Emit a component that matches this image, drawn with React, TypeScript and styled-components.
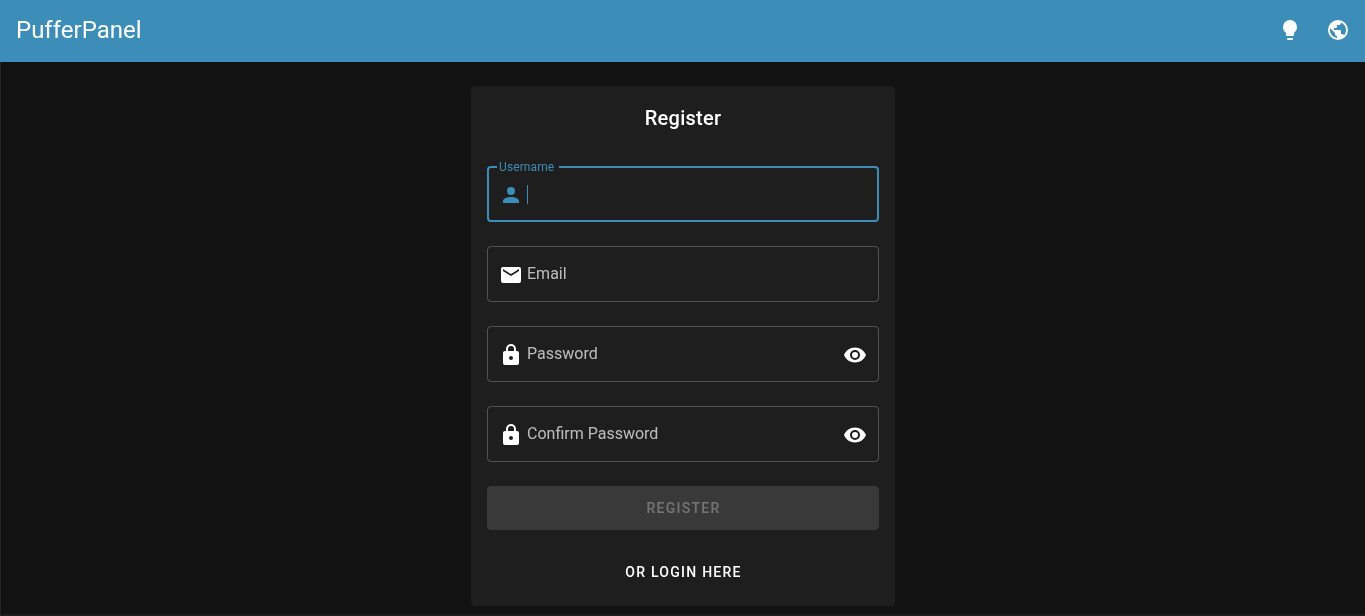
import React from "react";
import styled, { createGlobalStyle } from "styled-components";

const Global = createGlobalStyle`
  html, body { margin: 0; padding: 0; height: 100%; background: #121212; }
  body { font-family: Roboto, "Liberation Sans", sans-serif; overflow: hidden; }
  * { box-sizing: border-box; }
`;

const Page = styled.div`
  display: flex;
  flex-direction: column;
  height: 616px;
  overflow: hidden;
  will-change: transform;
`;

const AppBar = styled.header`
  display: flex;
  align-items: center;
  flex: 0 0 62px;
  padding: 0 3px 2px 16px;
  background: #3d8db9;
  color: #fff;
`;

const Brand = styled.div`
  flex: 1;
  font-size: 24px;
  line-height: 1;
  font-weight: 400;
`;

const BarButton = styled.button`
  display: flex;
  align-items: center;
  justify-content: center;
  width: 48px;
  height: 48px;
  padding: 0;
  border: 0;
  background: transparent;
  color: #fff;
`;

const Main = styled.main`
  flex: 1;
  display: flex;
  justify-content: center;
  align-items: flex-start;
  padding-top: 24px;
  border-left: 1px solid #262626;
  border-bottom: 2px solid #1e1e1e;
`;

const Card = styled.section`
  display: flex;
  flex-direction: column;
  flex: none;
  width: 424px;
  padding: 16px 16px 12px;
  background: #1e1e1e;
  border-radius: 4px;
`;

const Title = styled.h1`
  flex: none;
  margin: 0 0 32px;
  height: 32px;
  font-size: 20px;
  line-height: 32px;
  font-weight: 500;
  letter-spacing: 0.25px;
  text-align: center;
  color: #fff;
`;

const Field = styled.div<{ $focused?: boolean }>`
  position: relative;
  display: flex;
  flex: none;
  align-items: center;
  height: 56px;
  margin-bottom: 24px;
  padding: ${(p) => (p.$focused ? "0 10px" : "0 11px")};
  border: ${(p) => (p.$focused ? "2px solid #3d8db9" : "1px solid rgba(255,255,255,0.23)")};
  border-radius: 4px;
  color: ${(p) => (p.$focused ? "#3d8db9" : "#fff")};
`;

const FloatingLabel = styled.span`
  position: absolute;
  left: 8px;
  top: -9px;
  padding: 0 5px 0 2px;
  background: #1e1e1e;
  font-size: 12px;
  line-height: 16px;
  letter-spacing: 0.1px;
  color: #3d8db9;
`;

const Caret = styled.span`
  display: block;
  width: 1px;
  height: 19px;
  margin-left: 4px;
  background: #3d8db9;
`;

const Placeholder = styled.span`
  flex: 1;
  margin-left: 4px;
  font-size: 16px;
  line-height: 24px;
  color: rgba(255, 255, 255, 0.7);
`;

const Submit = styled.button`
  flex: none;
  height: 44px;
  margin-bottom: 20px;
  padding: 0 0 0 1px;
  border: 0;
  border-radius: 4px;
  background: rgba(255, 255, 255, 0.12);
  color: rgba(255, 255, 255, 0.3);
  font: 500 14px/24px Roboto, sans-serif;
  letter-spacing: 1.25px;
  text-transform: uppercase;
`;

const LoginLink = styled.a`
  display: block;
  flex: none;
  height: 44px;
  padding-left: 1px;
  font: 500 14px/44px Roboto, sans-serif;
  letter-spacing: 1.25px;
  text-align: center;
  text-transform: uppercase;
  color: #fff;
`;

const Svg = styled.svg<{ $inField?: boolean }>`
  display: block;
  flex: none;
  width: 24px;
  height: 24px;
  margin-top: ${(p) => (p.$inField ? "2px" : "0")};
  fill: currentColor;
`;

const paths = {
  person: "M12,4A4,4 0 0,1 16,8A4,4 0 0,1 12,12A4,4 0 0,1 8,8A4,4 0 0,1 12,4M12,14C16.42,14 20,15.79 20,18V20H4V18C4,15.79 7.58,14 12,14Z",
  email: "M20,8L12,13L4,8V6L12,11L20,6M20,4H4C2.89,4 2,4.89 2,6V18A2,2 0 0,0 4,20H20A2,2 0 0,0 22,18V6C22,4.89 21.1,4 20,4Z",
  lock: "M12,17A2,2 0 0,0 14,15C14,13.89 13.1,13 12,13A2,2 0 0,0 10,15A2,2 0 0,0 12,17M18,8A2,2 0 0,1 20,10V20A2,2 0 0,1 18,22H6A2,2 0 0,1 4,20V10C4,8.89 4.9,8 6,8H7V6A5,5 0 0,1 12,1A5,5 0 0,1 17,6V8H18M12,3A3,3 0 0,0 9,6V8H15V6A3,3 0 0,0 12,3Z",
  eye: "M12,9A3,3 0 0,0 9,12A3,3 0 0,0 12,15A3,3 0 0,0 15,12A3,3 0 0,0 12,9M12,17A5,5 0 0,1 7,12A5,5 0 0,1 12,7A5,5 0 0,1 17,12A5,5 0 0,1 12,17M12,4.5C7,4.5 2.73,7.61 1,12C2.73,16.39 7,19.5 12,19.5C17,19.5 21.27,16.39 23,12C21.27,7.61 17,4.5 12,4.5Z",
  bulb: "M12,2A7,7 0 0,0 5,9C5,11.38 6.19,13.47 8,14.74V17A1,1 0 0,0 9,18H15A1,1 0 0,0 16,17V14.74C17.81,13.47 19,11.38 19,9A7,7 0 0,0 12,2M9,21A1,1 0 0,0 10,22H14A1,1 0 0,0 15,21V20H9V21Z",
  globe: "M17.9,17.39C17.64,16.59 16.89,16 16,16H15V13A1,1 0 0,0 14,12H8V10H10A1,1 0 0,0 11,9V7H13A2,2 0 0,0 15,5V4.59C17.93,5.77 20,8.64 20,12C20,14.08 19.2,15.97 17.9,17.39M11,19.93C7.05,19.44 4,16.08 4,12C4,11.38 4.08,10.78 4.21,10.21L9,15V16A2,2 0 0,0 11,18M12,2A10,10 0 0,0 2,12A10,10 0 0,0 12,22A10,10 0 0,0 22,12A10,10 0 0,0 12,2Z",
};

const Icon = ({ name, inField }: { name: keyof typeof paths; inField?: boolean }) => (
  <Svg viewBox="0 0 24 24" aria-hidden="true" $inField={inField}>
    <path d={paths[name]} />
  </Svg>
);

export default function App() {
  return (
    <Page>
      <Global />
      <AppBar>
        <Brand>PufferPanel</Brand>
        <BarButton aria-label="Hints"><Icon name="bulb" /></BarButton>
        <BarButton aria-label="Language"><Icon name="globe" /></BarButton>
      </AppBar>
      <Main>
        <Card>
          <Title>Register</Title>
          <Field $focused>
            <FloatingLabel>Username</FloatingLabel>
            <Icon name="person" inField />
            <Caret />
          </Field>
          <Field>
            <Icon name="email" inField />
            <Placeholder>Email</Placeholder>
          </Field>
          <Field>
            <Icon name="lock" inField />
            <Placeholder>Password</Placeholder>
            <Icon name="eye" inField />
          </Field>
          <Field>
            <Icon name="lock" inField />
            <Placeholder>Confirm Password</Placeholder>
            <Icon name="eye" inField />
          </Field>
          <Submit disabled>Register</Submit>
          <LoginLink>Or login here</LoginLink>
        </Card>
      </Main>
    </Page>
  );
}
